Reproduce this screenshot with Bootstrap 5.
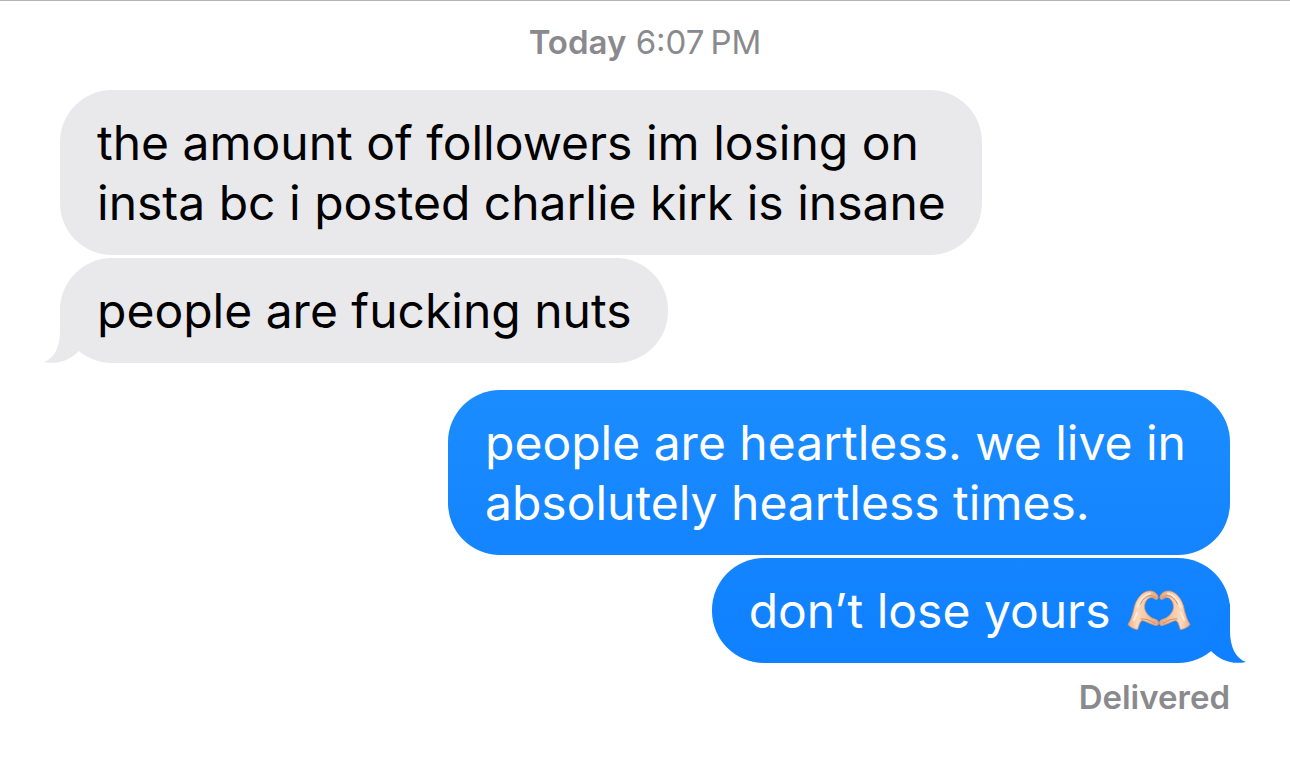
<!DOCTYPE html>
<html lang="en">
<head>
<meta charset="utf-8">
<meta name="viewport" content="width=device-width, initial-scale=1">
<title>Messages</title>
<link rel="stylesheet" href="https://cdn.jsdelivr.net/npm/bootstrap@5.3.0/dist/css/bootstrap.min.css">
<style>
body{font-family:Inter,"Liberation Sans",sans-serif;background:#fff;color:#000}
.thread{border-top:1px solid #b3b3b5;padding:23px 60px}
.meta-note{font-size:33px;line-height:36px;color:#8a8a8e}
.stamp{margin-bottom:30px}
.group{gap:3px}
.sent-group{margin-top:27px;margin-bottom:16px}
.bubble{position:relative;font-size:48px;line-height:60px;padding:23px 36px 22px 37px;border-radius:52px;max-width:924px}
.received{background:#e9e9eb}
.sent{background:linear-gradient(#1b8cff,#1484ff);color:#fff;max-width:782px}
.sent-last{background:linear-gradient(#1484ff,#0f80ff)}
.tail{position:absolute;bottom:0;width:60px;height:60px}
.tail-left{left:-16px;fill:#e9e9eb}
.tail-right{right:-16px;fill:#0f80ff}
.hands{width:64px;height:48px;margin:0 3px;vertical-align:-6px}
</style>
</head>
<body>
<main class="thread d-flex flex-column">
<p class="meta-note stamp text-center"><strong class="fw-semibold">Today</strong> 6:07&#8239;PM</p>
<section class="group d-flex flex-column align-items-start" aria-label="Received">
<div class="bubble received">the amount of followers im losing on<br>insta bc i posted charlie kirk is insane</div>
<div class="bubble received">people are fucking nuts
<svg class="tail tail-left" viewBox="0 0 60 60" aria-hidden="true"><path d="M16 0V28C16 43 11 55 0 59C14 62 26 57 35 48L42 38Z"/></svg>
</div>
</section>
<section class="group sent-group d-flex flex-column align-items-end" aria-label="Sent">
<div class="bubble sent">people are heartless. we live in absolutely heartless times.</div>
<div class="bubble sent sent-last">don’t lose yours
<svg class="hands" viewBox="8 6 64 48" role="img" aria-label="Heart hands">
<defs>
<linearGradient id="skin" x1="0" y1="0" x2="1" y2="0"><stop offset="0" stop-color="#edb18b"/><stop offset=".3" stop-color="#fbd9bd"/><stop offset=".6" stop-color="#f6c8a6"/><stop offset="1" stop-color="#e5a27c"/></linearGradient>
<g id="hand">
<path d="M9 44.500C12 40 13 36 14.500 31C15.500 24 18 19 22 15C26 11 31 10 35 12C38 13.500 40 17 38.500 19C37 20.500 35.500 18.500 33.500 17.500C29 17 26 21 25.500 26C25 31 29 36 34 38.500C37 39.500 39.500 40 39.500 43C39.500 46 37 46 34 44.500C30 43.500 26 40.500 23 40.500C20.500 42 20 46 18.500 49.500C15 49 11.500 47.500 9 44.500Z" fill="url(#skin)" stroke="#dc9a73" stroke-width=".8"/>
<path d="M18.500 27Q22 16 31 13.500M15 40L18 33" fill="none" stroke="#ffebd7" stroke-width="2" stroke-linecap="round"/>
<path d="M21.500 24Q25 16 31 15.500Q34 15 37 18.500M22 39Q28 38 36 43.500" fill="none" stroke="#d58e68" stroke-width="1" stroke-linecap="round"/>
</g>
</defs>
<use href="#hand"/><use href="#hand" transform="translate(80 0) scale(-1 1)"/>
</svg>
<svg class="tail tail-right" viewBox="0 0 60 60" aria-hidden="true"><path d="M44 0V28C44 43 49 55 60 59C46 62 34 57 25 48L18 38Z"/></svg>
</div>
</section>
<p class="meta-note fw-semibold align-self-end mb-0">Delivered</p>
</main>
<script src="https://cdn.jsdelivr.net/npm/bootstrap@5.3.0/dist/js/bootstrap.bundle.min.js"></script>
</body>
</html>
